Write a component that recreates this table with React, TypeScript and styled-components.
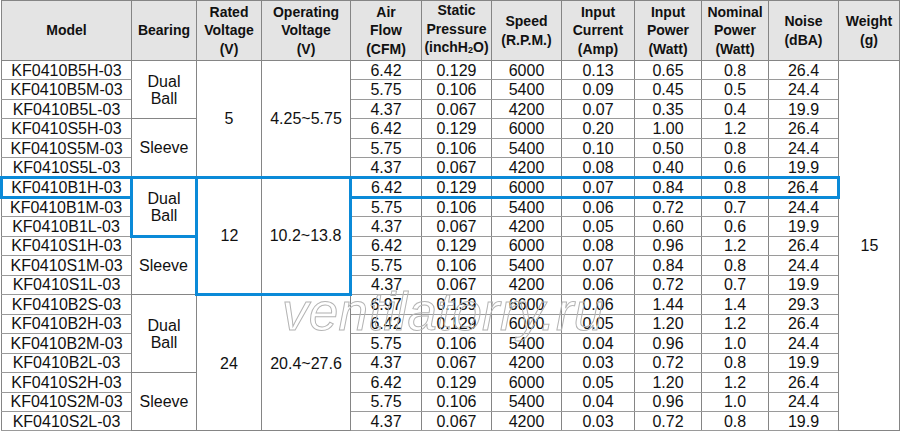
import React from 'react';
import styled, { createGlobalStyle, css } from 'styled-components';

const GlobalStyle = createGlobalStyle`
  html, body {
    margin: 0;
    padding: 0;
    background: #ffffff;
  }
  body {
    font-family: 'Liberation Sans', Arial, sans-serif;
    color: #111;
  }
`;

const LINE = '#858585';
const ROW_LINE = '#9a9a9a';
const BLUE = '#0b8ad8';

const Wrapper = styled.div`
  position: relative;
  width: 900px;
  height: 431px;
  overflow: hidden;
`;

const Table = styled.table`
  width: 899px;
  table-layout: fixed;
  border-collapse: collapse;
  border: 1px solid ${LINE};
  font-family: 'Liberation Sans', Arial, sans-serif;
`;

const HeadCell = styled.th`
  background: #e4e4e4;
  border: 1px solid ${LINE};
  font-size: 14px;
  font-weight: bold;
  line-height: 18.5px;
  text-align: center;
  vertical-align: middle;
  padding: 0;
  height: 59px;
`;

type Edges = { t?: boolean; r?: boolean; b?: boolean; l?: boolean };

const blueEdges = ({ $hl }: { $hl?: Edges }) =>
  $hl &&
  css`
    ${$hl.t && `border-top: 3px solid ${BLUE};`}
    ${$hl.r && `border-right: 3px solid ${BLUE};`}
    ${$hl.b && `border-bottom: 3px solid ${BLUE};`}
    ${$hl.l && `border-left: 3px solid ${BLUE};`}
  `;

const Cell = styled.td<{ $hl?: Edges }>`
  border-left: 1px solid ${LINE};
  border-right: 1px solid ${LINE};
  border-top: 1px solid ${ROW_LINE};
  border-bottom: 1px solid ${ROW_LINE};
  font-size: 16px;
  line-height: 17px;
  text-align: center;
  vertical-align: middle;
  padding: 0;
  white-space: nowrap;
  ${blueEdges}
`;

const GroupCell = styled(Cell)`
  border-top: 1px solid ${LINE};
  border-bottom: 1px solid ${LINE};
  white-space: normal;
  ${blueEdges}
`;

const Row = styled.tr`
  height: 19.47px;
`;

const Watermark = styled.div`
  position: absolute;
  left: 282px;
  top: 281px;
  font-family: 'Liberation Sans', Arial, sans-serif;
  font-style: italic;
  font-size: 53px;
  letter-spacing: 0.3px;
  color: transparent;
  -webkit-text-stroke: 1px #b4b4b4;
  pointer-events: none;
  white-space: nowrap;
`;

type Spec = [string, string, string, string, string, string, string, string];

const rows: Spec[] = [
  ['KF0410B5H-03', '6.42', '0.129', '6000', '0.13', '0.65', '0.8', '26.4'],
  ['KF0410B5M-03', '5.75', '0.106', '5400', '0.09', '0.45', '0.5', '24.4'],
  ['KF0410B5L-03', '4.37', '0.067', '4200', '0.07', '0.35', '0.4', '19.9'],
  ['KF0410S5H-03', '6.42', '0.129', '6000', '0.20', '1.00', '1.2', '26.4'],
  ['KF0410S5M-03', '5.75', '0.106', '5400', '0.10', '0.50', '0.8', '24.4'],
  ['KF0410S5L-03', '4.37', '0.067', '4200', '0.08', '0.40', '0.6', '19.9'],
  ['KF0410B1H-03', '6.42', '0.129', '6000', '0.07', '0.84', '0.8', '26.4'],
  ['KF0410B1M-03', '5.75', '0.106', '5400', '0.06', '0.72', '0.7', '24.4'],
  ['KF0410B1L-03', '4.37', '0.067', '4200', '0.05', '0.60', '0.6', '19.9'],
  ['KF0410S1H-03', '6.42', '0.129', '6000', '0.08', '0.96', '1.2', '26.4'],
  ['KF0410S1M-03', '5.75', '0.106', '5400', '0.07', '0.84', '0.8', '24.4'],
  ['KF0410S1L-03', '4.37', '0.067', '4200', '0.06', '0.72', '0.7', '19.9'],
  ['KF0410B2S-03', '6.97', '0.159', '6600', '0.06', '1.44', '1.4', '29.3'],
  ['KF0410B2H-03', '6.42', '0.129', '6000', '0.05', '1.20', '1.2', '26.4'],
  ['KF0410B2M-03', '5.75', '0.106', '5400', '0.04', '0.96', '1.0', '24.4'],
  ['KF0410B2L-03', '4.37', '0.067', '4200', '0.03', '0.72', '0.8', '19.9'],
  ['KF0410S2H-03', '6.42', '0.129', '6000', '0.05', '1.20', '1.2', '26.4'],
  ['KF0410S2M-03', '5.75', '0.106', '5400', '0.04', '0.96', '1.0', '24.4'],
  ['KF0410S2L-03', '4.37', '0.067', '4200', '0.03', '0.72', '0.8', '19.9'],
];

// bearing groups: start row -> [rowspan, label, highlight]
const bearing: Record<number, [number, string, Edges?]> = {
  0: [3, 'Dual Ball'],
  3: [3, 'Sleeve'],
  6: [3, 'Dual Ball', { t: true, r: true, b: true, l: true }],
  9: [3, 'Sleeve'],
  12: [4, 'Dual Ball'],
  16: [3, 'Sleeve'],
};

// voltage groups: start row -> [rowspan, rated, operating, highlighted]
const voltage: Record<number, [number, string, string, boolean]> = {
  0: [6, '5', '4.25~5.75', false],
  6: [6, '12', '10.2~13.8', true],
  12: [7, '24', '20.4~27.6', false],
};

const HIGHLIGHT_ROW = 6;

const widths = [130, 65, 65, 89, 71, 70, 70, 73, 67, 67, 70, 61];

const App: React.FC = () => {
  return (
    <Wrapper>
      <GlobalStyle />
      <Table>
        <colgroup>
          {widths.map((w, i) => (
            <col key={i} style={{ width: w }} />
          ))}
        </colgroup>
        <thead>
          <tr>
            <HeadCell>Model</HeadCell>
            <HeadCell>Bearing</HeadCell>
            <HeadCell>Rated<br />Voltage<br />(V)</HeadCell>
            <HeadCell>Operating<br />Voltage<br />(V)</HeadCell>
            <HeadCell>Air<br />Flow<br />(CFM)</HeadCell>
            <HeadCell>
              Static<br />Pressure<br />(inchH<sub style={{ fontSize: 9, verticalAlign: -1 }}>2</sub>O)
            </HeadCell>
            <HeadCell>Speed<br />(R.P.M.)</HeadCell>
            <HeadCell>Input<br />Current<br />(Amp)</HeadCell>
            <HeadCell>Input<br />Power<br />(Watt)</HeadCell>
            <HeadCell>Nominal<br />Power<br />(Watt)</HeadCell>
            <HeadCell>Noise<br />(dBA)</HeadCell>
            <HeadCell>Weight<br />(g)</HeadCell>
          </tr>
        </thead>
        <tbody>
          {rows.map((r, i) => {
            const hot = i === HIGHLIGHT_ROW;
            const b = bearing[i];
            const v = voltage[i];
            const [model, ...vals] = r;
            return (
              <Row key={model}>
                <Cell $hl={hot ? { t: true, b: true, l: true, r: true } : undefined}>{model}</Cell>
                {b && (
                  <GroupCell rowSpan={b[0]} $hl={b[2]}>
                    {b[1]}
                  </GroupCell>
                )}
                {v && (
                  <>
                    <GroupCell rowSpan={v[0]} $hl={v[3] ? { t: true, b: true, l: true } : undefined}>
                      {v[1]}
                    </GroupCell>
                    <GroupCell rowSpan={v[0]} $hl={v[3] ? { t: true, b: true, r: true } : undefined}>
                      {v[2]}
                    </GroupCell>
                  </>
                )}
                {vals.map((val, j) => (
                  <Cell
                    key={j}
                    $hl={
                      hot
                        ? { t: true, b: true, l: j === 0, r: j === vals.length - 1 }
                        : undefined
                    }
                  >
                    {val}
                  </Cell>
                ))}
                {i === 0 && <GroupCell rowSpan={rows.length}>15</GroupCell>}
              </Row>
            );
          })}
        </tbody>
      </Table>
      <Watermark>ventilatorry.ru</Watermark>
    </Wrapper>
  );
};

export default App;
